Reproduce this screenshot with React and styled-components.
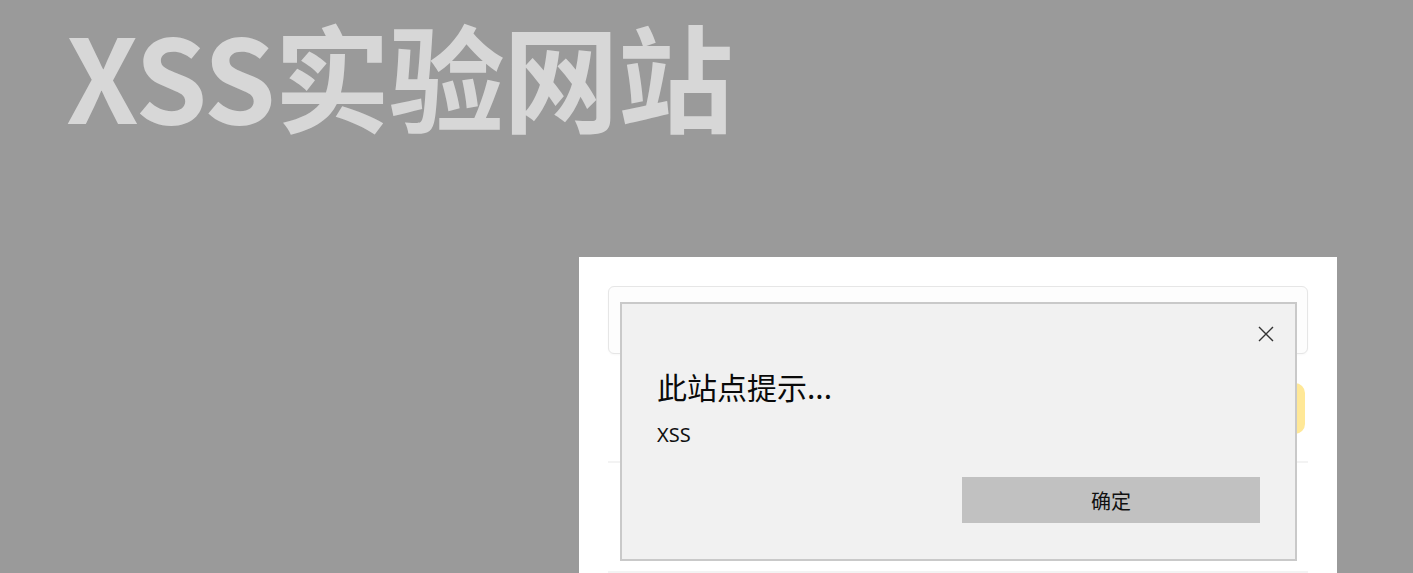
import styled, {createGlobalStyle} from 'styled-components';

const GlobalStyle = createGlobalStyle`
    html, body {
        margin: 0;
        padding: 0;
        background: #9a9a9a;
        overflow: hidden;
    }

    body {
        font-family: "Noto Sans CJK SC", "Noto Sans", sans-serif;
    }
`;

const Page = styled.div`
    width: 1413px;
    height: 573px;
    overflow: hidden;
    background: #9a9a9a;
`;

const SiteTitle = styled.h1`
    margin: 0;
    padding: 4px 0 0 66px;
    font-family: "Noto Sans CJK SC", sans-serif;
    font-size: 116px;
    font-weight: 700;
    line-height: 139px;
    letter-spacing: -1.6px;
    color: #d7d7d7;
    white-space: nowrap;
`;

const Card = styled.section`
    position: relative;
    margin: 114px 0 0 579px;
    width: 758px;
    height: 400px;
    box-sizing: border-box;
    padding: 29px 29px 0;
    background: #ffffff;
`;

const InputBox = styled.div`
    height: 68px;
    box-sizing: border-box;
    border: 1px solid #e6e6e6;
    border-radius: 6px;
    background: #fdfdfd;
    box-shadow: 0 1px 2px rgba(0, 0, 0, 0.03);
`;

const ActionRow = styled.div`
    display: flex;
    justify-content: flex-end;
    padding: 29px 3px 0 0;
`;

const YellowButton = styled.button`
    width: 130px;
    height: 51px;
    border: none;
    border-radius: 10px;
    background: #ffe897;
`;

const Divider = styled.hr`
    margin: ${({$gap}) => $gap}px 0 0;
    border: none;
    border-top: 2px solid #f3f3f3;
`;

const Dialog = styled.div`
    position: absolute;
    left: 41px;
    top: 45px;
    width: 677px;
    height: 259px;
    box-sizing: border-box;
    border: 2px solid #c9c9c9;
    background: #f1f1f1;
    padding: 62px 35px 0;
    font-family: "Noto Sans CJK SC", sans-serif;
    color: #111;
`;

const CloseButton = styled.button`
    position: absolute;
    top: 19px;
    right: 18px;
    width: 22px;
    height: 22px;
    padding: 0;
    border: none;
    background: transparent;
    display: flex;
    align-items: center;
    justify-content: center;
`;

const DialogTitle = styled.div`
    font-size: 30px;
    line-height: 40px;
    color: #0a0a0a;
`;

const DialogMessage = styled.div`
    margin-top: 16px;
    font-family: "Noto Sans", sans-serif;
    font-size: 20px;
    line-height: 26px;
`;

const DialogFooter = styled.div`
    display: flex;
    justify-content: flex-end;
    margin-top: 29px;
`;

const ConfirmButton = styled.button`
    width: 298px;
    height: 46px;
    border: none;
    background: #c1c1c1;
    font-family: "Noto Sans CJK SC", sans-serif;
    font-size: 20px;
    color: #111;
`;

export default function App() {
    return (
        <Page>
            <GlobalStyle/>
            <SiteTitle>XSS实验网站</SiteTitle>
            <Card>
                <InputBox/>
                <ActionRow>
                    <YellowButton/>
                </ActionRow>
                <Divider $gap={27}/>
                <Divider $gap={108}/>
                <Dialog>
                    <CloseButton aria-label="关闭">
                        <svg width="18" height="18" viewBox="0 0 18 18">
                            <path d="M2 2L16 16M16 2L2 16" stroke="#333" strokeWidth="1.4" fill="none"/>
                        </svg>
                    </CloseButton>
                    <DialogTitle>此站点提示...</DialogTitle>
                    <DialogMessage>XSS</DialogMessage>
                    <DialogFooter>
                        <ConfirmButton>确定</ConfirmButton>
                    </DialogFooter>
                </Dialog>
            </Card>
        </Page>
    );
}
